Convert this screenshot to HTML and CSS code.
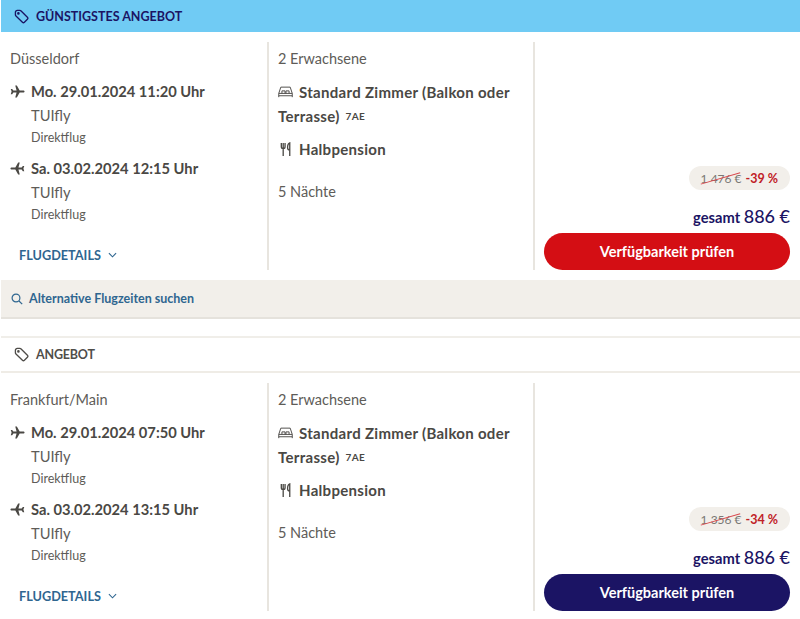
FILE: index.html
```html
<!DOCTYPE html>
<html lang="de">
<head>
<meta charset="utf-8">
<title>Angebote</title>
<link rel="stylesheet" href="styles.css">
</head>
<body>
<section class="offer">
  <header class="head head-best">
    <svg class="tag" viewBox="0 0 16 16"><path d="M1.500 3.500a2 2 0 0 1 2-2h2.700a2 2 0 0 1 1.400.6l6.700 6.700a1.500 1.500 0 0 1 0 2.100l-3.200 3.200a1.500 1.500 0 0 1-2.100 0L2.100 7.400a2 2 0 0 1-.6-1.400z"/><circle cx="4.700" cy="4.700" r=".7"/></svg>
    <span>GÜNSTIGSTES ANGEBOT</span>
  </header>
  <div class="cols">
    <div class="col col-flight">
      <div class="muted">Düsseldorf</div>
      <div class="flight">
        <div class="when"><svg class="plane" viewBox="0 0 16 16"><path d="M15.500 8c0-.7-.6-1.100-1.300-1.100H10.300L7.300 1.500H5.600l1.400 5.400H3.600L2.300 5.200H.8L1.700 8l-.9 2.800h1.500l1.300-1.700H7l-1.400 5.400h1.700l3-5.400h3.900c.7 0 1.300-.4 1.300-1.100z"/></svg>Mo. 29.01.2024 11:20 Uhr</div>
        <div class="air">TUIfly</div>
        <div class="direct">Direktflug</div>
      </div>
      <div class="flight">
        <div class="when"><svg class="plane flip" viewBox="0 0 16 16"><path d="M15.500 8c0-.7-.6-1.100-1.300-1.100H10.300L7.300 1.500H5.600l1.400 5.400H3.600L2.300 5.200H.8L1.700 8l-.9 2.800h1.500l1.300-1.700H7l-1.400 5.400h1.700l3-5.400h3.900c.7 0 1.300-.4 1.300-1.100z"/></svg>Sa. 03.02.2024 12:15 Uhr</div>
        <div class="air">TUIfly</div>
        <div class="direct">Direktflug</div>
      </div>
      <div class="details">FLUGDETAILS<svg class="chev" viewBox="0 0 10 6"><path d="M1 1l4 4 4-4"/></svg></div>
    </div>
    <div class="col col-room">
      <div class="muted">2 Erwachsene</div>
      <div class="room">
        <div class="room-line"><svg class="bed" viewBox="0 0 16 12"><path d="M.8 11.500V7.500L3 .8h10l2.200 6.700v4M.8 7.500h14.400M.8 10h14.400M4.200 7.500V4.800h3.300v2.700M8.500 7.500V4.800h3.300v2.700"/></svg><span>Standard Zimmer (Balkon oder</span></div>
        <div class="room-line"><span>Terrasse)</span><small>7AE</small></div>
      </div>
      <div class="board"><svg class="fork" viewBox="0 0 12 16"><path d="M1 1v4c0 1.500 1 2 2 2s2-.5 2-2V1M3 1v14M10 15V1c-1.500.5-2.300 2.500-2.300 5 0 1.500.9 2.500 2.300 2.500"/></svg>Halbpension</div>
      <div class="muted nights">5 Nächte</div>
    </div>
    <div class="col col-price">
      <div class="badge"><span class="old">1 476 €</span><span class="pct">-39 %</span></div>
      <div class="total">gesamt <b>886 €</b></div>
      <button class="btn btn-red">Verfügbarkeit prüfen</button>
    </div>
  </div>
  <div class="alt">
    <svg class="search" viewBox="0 0 12 12"><circle cx="5" cy="5" r="3.900"/><path d="M8 8l3.200 3.200"/></svg>
    <span>Alternative Flugzeiten suchen</span>
  </div>
</section>
<section class="offer offer-plain">
  <header class="head head-plain">
    <svg class="tag" viewBox="0 0 16 16"><path d="M1.500 3.500a2 2 0 0 1 2-2h2.700a2 2 0 0 1 1.400.6l6.700 6.700a1.500 1.500 0 0 1 0 2.100l-3.200 3.200a1.500 1.500 0 0 1-2.100 0L2.100 7.400a2 2 0 0 1-.6-1.400z"/><circle cx="4.700" cy="4.700" r=".7"/></svg>
    <span>ANGEBOT</span>
  </header>
  <div class="cols">
    <div class="col col-flight">
      <div class="muted">Frankfurt/Main</div>
      <div class="flight">
        <div class="when"><svg class="plane" viewBox="0 0 16 16"><path d="M15.500 8c0-.7-.6-1.100-1.300-1.100H10.300L7.300 1.500H5.600l1.400 5.400H3.600L2.300 5.200H.8L1.700 8l-.9 2.800h1.500l1.300-1.700H7l-1.400 5.400h1.700l3-5.400h3.900c.7 0 1.300-.4 1.300-1.100z"/></svg>Mo. 29.01.2024 07:50 Uhr</div>
        <div class="air">TUIfly</div>
        <div class="direct">Direktflug</div>
      </div>
      <div class="flight">
        <div class="when"><svg class="plane flip" viewBox="0 0 16 16"><path d="M15.500 8c0-.7-.6-1.100-1.300-1.100H10.300L7.300 1.500H5.600l1.400 5.400H3.600L2.300 5.200H.8L1.700 8l-.9 2.800h1.500l1.300-1.700H7l-1.400 5.400h1.700l3-5.400h3.900c.7 0 1.300-.4 1.300-1.100z"/></svg>Sa. 03.02.2024 13:15 Uhr</div>
        <div class="air">TUIfly</div>
        <div class="direct">Direktflug</div>
      </div>
      <div class="details">FLUGDETAILS<svg class="chev" viewBox="0 0 10 6"><path d="M1 1l4 4 4-4"/></svg></div>
    </div>
    <div class="col col-room">
      <div class="muted">2 Erwachsene</div>
      <div class="room">
        <div class="room-line"><svg class="bed" viewBox="0 0 16 12"><path d="M.8 11.500V7.500L3 .8h10l2.200 6.700v4M.8 7.500h14.400M.8 10h14.400M4.200 7.500V4.800h3.300v2.700M8.500 7.500V4.800h3.300v2.700"/></svg><span>Standard Zimmer (Balkon oder</span></div>
        <div class="room-line"><span>Terrasse)</span><small>7AE</small></div>
      </div>
      <div class="board"><svg class="fork" viewBox="0 0 12 16"><path d="M1 1v4c0 1.500 1 2 2 2s2-.5 2-2V1M3 1v14M10 15V1c-1.500.5-2.300 2.500-2.300 5 0 1.500.9 2.500 2.300 2.500"/></svg>Halbpension</div>
      <div class="muted nights">5 Nächte</div>
    </div>
    <div class="col col-price">
      <div class="badge"><span class="old">1 356 €</span><span class="pct">-34 %</span></div>
      <div class="total">gesamt <b>886 €</b></div>
      <button class="btn btn-navy">Verfügbarkeit prüfen</button>
    </div>
  </div>
</section>
</body>
</html>
```

FILE: styles.css
```css
* { box-sizing: border-box; }
html, body { margin: 0; padding: 0; background: #fff; }
body {
  width: 800px;
  height: 619px;
  overflow: hidden;
  font-family: "Lato", "Noto Sans", sans-serif;
  color: #4f4d49;
  font-size: 14px;
}
.offer { margin-left: 1px; }
.offer-plain { margin-top: 17px; }
.head {
  display: flex;
  align-items: center;
  gap: 7px;
  padding-left: 13px;
  font-weight: 700;
  font-size: 12.500px;
}
.head-best { height: 32px; background: #70cbf4; color: #1b1464; }
.head-plain { height: 37px; border-top: 2px solid #f0eee9; border-bottom: 2px solid #efece6; color: #4f4d49; }
.head-plain span { letter-spacing: -.2px; }
.tag { width: 15px; height: 15px; fill: none; stroke: currentColor; stroke-width: 1.400; }
.cols { display: flex; height: 248px; padding: 10px 0; }
.col { height: 228px; padding-top: 7px; }
.col-flight { width: 268px; padding-left: 9px; border-right: 2px solid #e8e5df; }
.col-room { width: 266px; padding-left: 9px; border-right: 2px solid #e8e5df; }
.col-price { width: 265px; padding: 0 10px 0 8px; display: flex; flex-direction: column; align-items: flex-end; justify-content: flex-end; }
.muted { font-size: 14.500px; line-height: 20px; color: #5e5c58; }
.flight { margin-top: 12px; }
.flight + .flight { margin-top: 10px; }
.when { display: flex; align-items: center; font-weight: 700; font-size: 14.700px; line-height: 20px; color: #4a4844; }
.plane { width: 15px; height: 15px; margin-right: 6px; fill: #4a4844; }
.flip { transform: scaleX(-1); }
.air { margin-left: 21px; margin-top: 4px; font-size: 14.700px; line-height: 20px; color: #5e5c58; }
.direct { margin-left: 21px; margin-top: 3px; font-size: 12.500px; line-height: 20px; color: #5e5c58; }
.details { margin-left: 9px; margin-top: 20px; font-size: 12.700px; font-weight: 700; line-height: 20px; color: #2f6690; display: flex; align-items: center; }
.chev { width: 9px; height: 6px; margin-left: 7px; fill: none; stroke: #2f6690; stroke-width: 1.200; }
.room { margin-top: 11px; font-weight: 700; font-size: 15px; letter-spacing: .3px; line-height: 24px; color: #4a4844; }
.room-line { display: flex; align-items: center; white-space: nowrap; }
.room small { font-size: 10px; line-height: 12px; margin-left: 6px; }
.bed { width: 15px; height: 12px; margin-right: 6px; fill: none; stroke: #4a4844; stroke-width: 1; }
.board { margin-top: 11px; font-weight: 700; font-size: 15px; letter-spacing: .3px; line-height: 20px; color: #4a4844; display: flex; align-items: center; }
.fork { width: 12px; height: 15px; margin: 0 7px 0 2px; fill: none; stroke: #4a4844; stroke-width: 1.400; }
.nights { margin-top: 23px; }
.badge { height: 24px; border-radius: 12px; background: #f2efea; padding: 0 12px; display: flex; align-items: center; gap: 4px; font-size: 12px; }
.old { position: relative; color: #7a7874; }
.old::after { content: ""; position: absolute; left: -1px; right: 1px; top: 50%; height: 1px; background: #d9474c; transform: rotate(-16deg); }
.pct { color: #c02026; font-size: 12.500px; font-weight: 700; }
.total { margin-top: 16px; font-size: 14.700px; font-weight: 700; line-height: 20px; color: #1b1464; }
.total b { font-size: 18px; font-weight: 500; }
.btn { margin-top: 6px; width: 246px; height: 37px; border: 0; border-radius: 19px; color: #fff; font-family: inherit; font-size: 14.500px; font-weight: 700; }
.btn-red { background: #d40e14; }
.btn-navy { background: #1b1464; }
.alt { height: 39px; background: #f2efea; border-bottom: 2px solid #e5e2dc; display: flex; align-items: center; gap: 6px; padding-left: 10px; font-size: 12.500px; font-weight: 700; color: #2f6690; }
.search { width: 12px; height: 12px; fill: none; stroke: #2f6690; stroke-width: 1.200; }
```
